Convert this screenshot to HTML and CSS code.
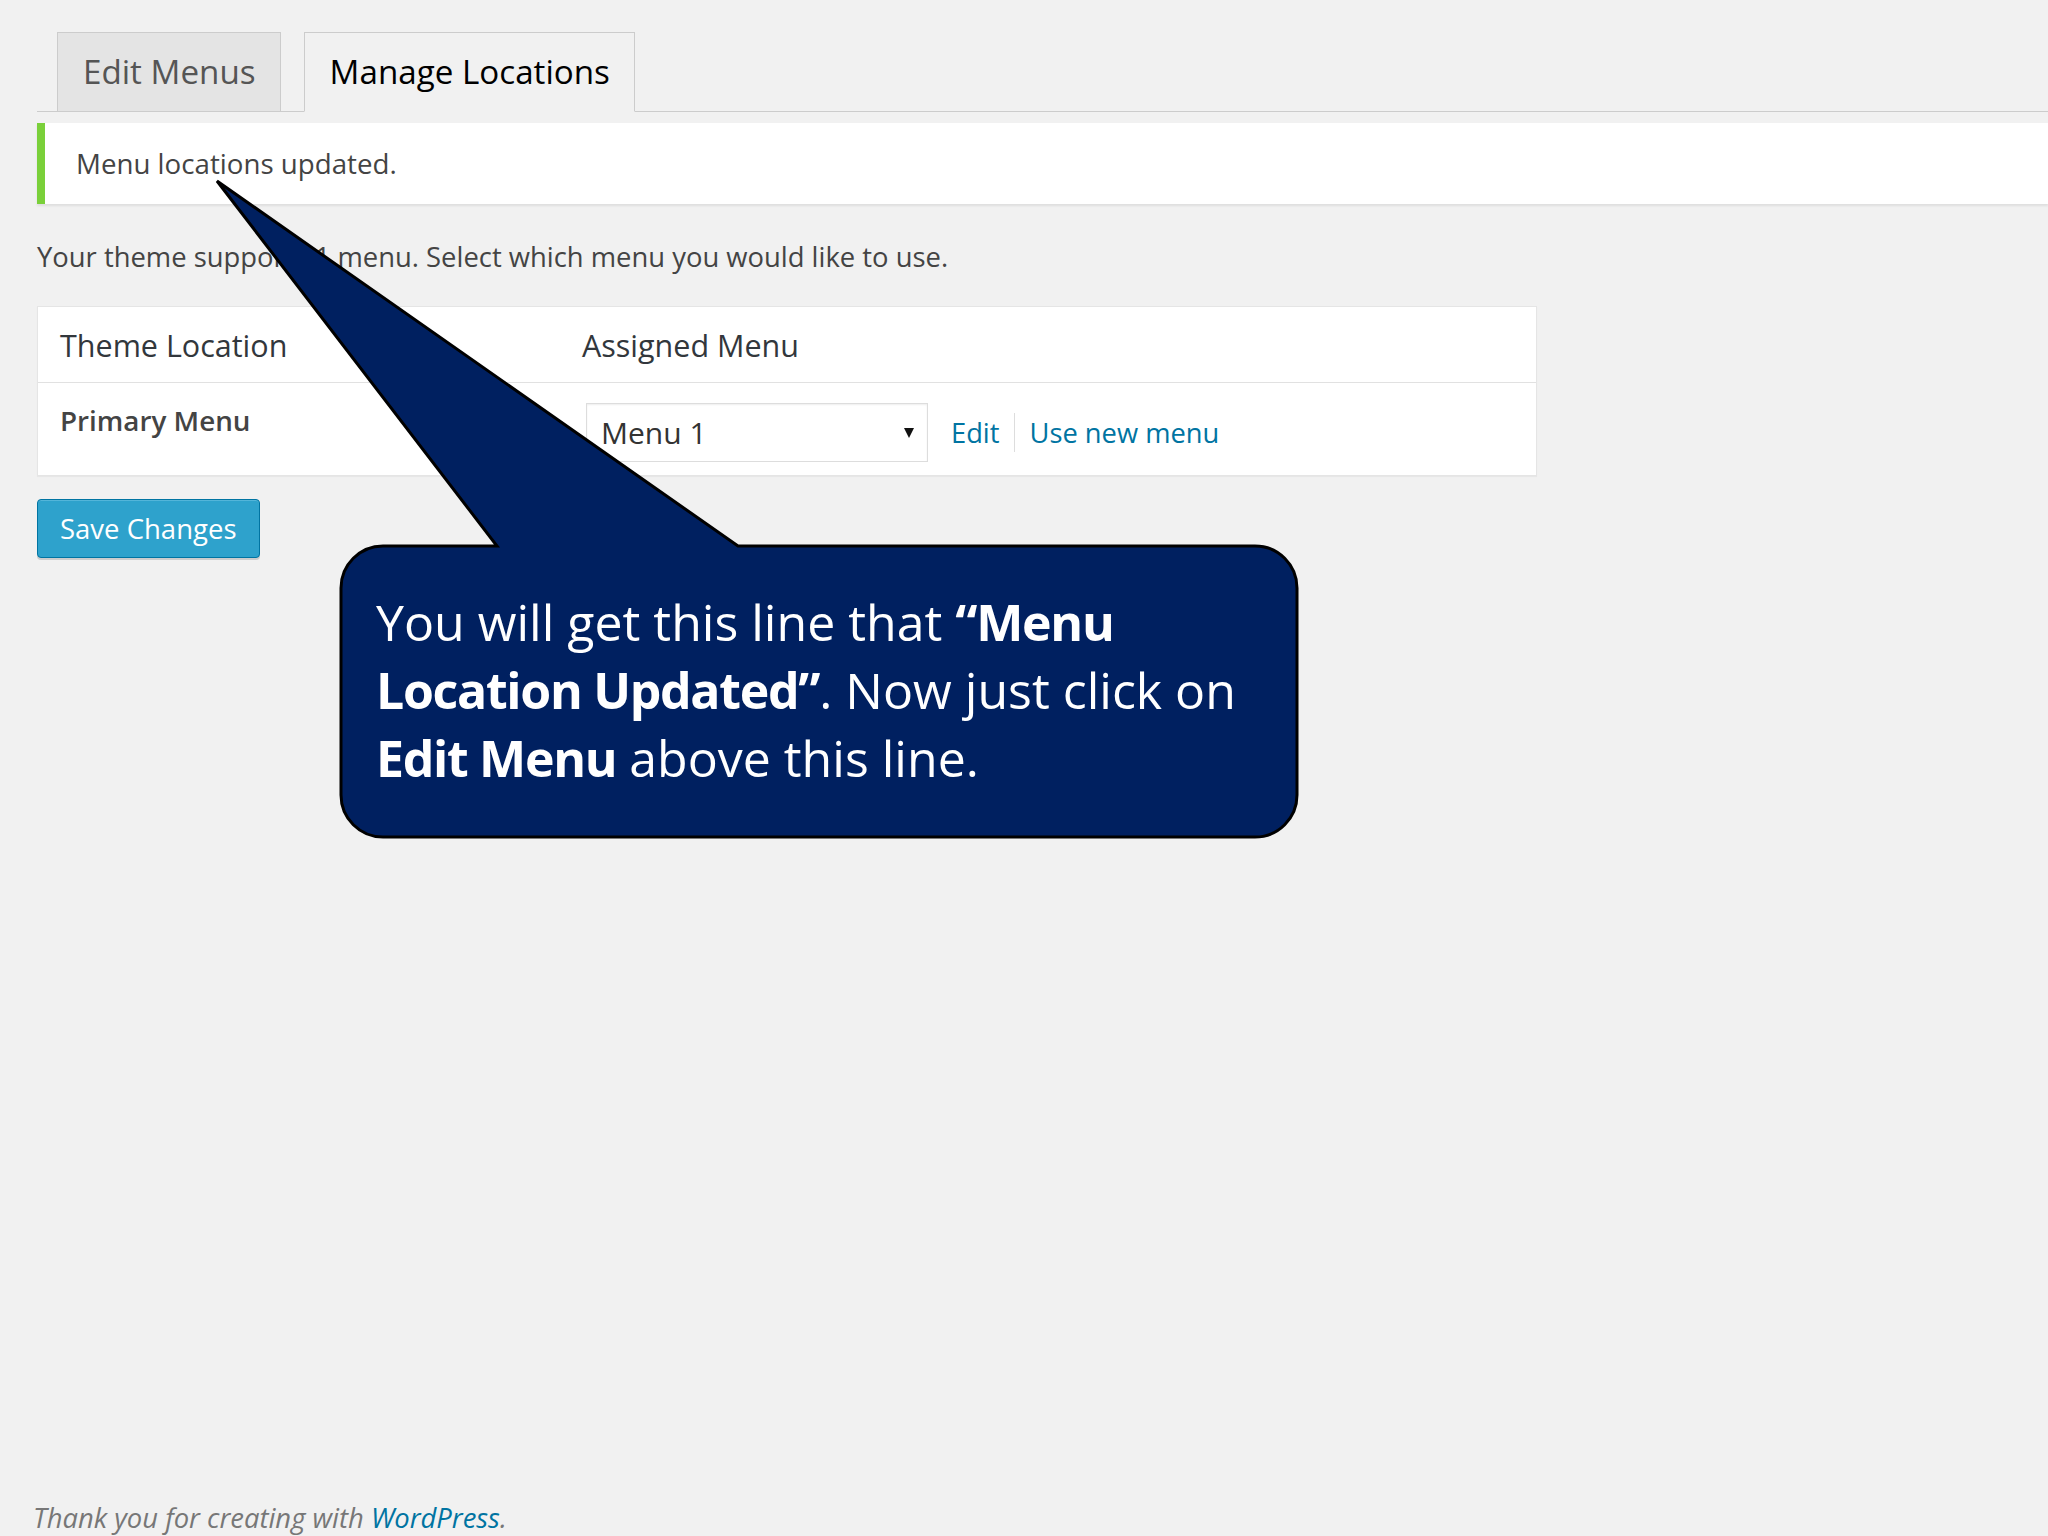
FILE: index.html
```html
<!DOCTYPE html>
<html>
<head>
<meta charset="utf-8">
<title>Manage Locations</title>
<link rel="stylesheet" href="styles.css">
</head>
<body>
<div class="page">
  <div class="wrap">
    <div class="tabs">
      <a class="tab">Edit Menus</a>
      <a class="tab active">Manage Locations</a>
    </div>
    <div class="notice"><p>Menu locations updated.</p></div>
    <p class="intro">Your theme supports 1 menu. Select which menu you would like to use.</p>
    <div class="loc-table">
      <div class="th col1">Theme Location</div>
      <div class="th col2">Assigned Menu</div>
      <div class="td col1 label">Primary Menu</div>
      <div class="td col2">
        <div class="assign">
          <div class="select"><span>Menu 1</span><i class="caret"></i></div>
          <a class="link">Edit</a>
          <span class="sep"></span>
          <a class="link">Use new menu</a>
        </div>
      </div>
    </div>
    <button class="save">Save Changes</button>
  </div>
  <footer class="footer"><span>Thank you for creating with <a class="wp">WordPress</a>.</span></footer>

  <svg class="callout-shape" width="2048" height="1536" viewBox="0 0 2048 1536">
    <path d="M 383 546 L 497 546 L 217 181 L 738 546 L 1255 546 A 42 42 0 0 1 1297 588 L 1297 795 A 42 42 0 0 1 1255 837 L 383 837 A 42 42 0 0 1 341 795 L 341 588 A 42 42 0 0 1 383 546 Z" fill="#002060" stroke="#000" stroke-width="3" stroke-linejoin="miter"/>
  </svg>
  <div class="callout-text">
    You will get this line that <b>“Menu<br>Location Updated”</b>. Now just click on<br><b>Edit Menu</b> above this line.
  </div>
</div>
</body>
</html>
```
FILE: styles.css
```css
html, body {
  margin: 0;
  padding: 0;
}
body {
  background: #f1f1f1;
  font-family: "Open Sans", "Noto Sans", sans-serif;
  color: #444;
}
.page {
  position: relative;
  height: 1536px;
  overflow: hidden;
  display: flex;
  flex-direction: column;
}
.wrap {
  padding: 32px 0 0 37px;
}
.tabs {
  display: flex;
  gap: 23px;
  padding-left: 20px;
  border-bottom: 1px solid #cccccc;
}
.tab {
  display: block;
  font-size: 33.2px;
  line-height: 44px;
  padding: 17px 24px 17px 25px;
  border: 1px solid #cccccc;
  border-bottom: 1px solid #cccccc;
  margin-bottom: -1px;
  background: #e4e4e4;
  color: #555;
}
.tab.active {
  background: #f1f1f1;
  border-bottom-color: #f1f1f1;
  color: #000;
}
.notice {
  margin-top: 11px;
  background: #fff;
  border-left: 8px solid #7ad03a;
  box-shadow: 0 2px 2px rgba(0, 0, 0, 0.08);
}
.notice p {
  margin: 0;
  padding: 22px 31px 23px;
  font-size: 27.7px;
  line-height: 36px;
  color: #444;
}
.intro {
  margin: 35px 0 0;
  font-size: 27.4px;
  line-height: 36px;
  color: #444;
}
.loc-table {
  margin-top: 31px;
  width: 1500px;
  box-sizing: border-box;
  display: grid;
  grid-template-columns: 522px 1fr;
  background: #fff;
  border: 1px solid #e5e5e5;
  box-shadow: 0 1px 1px rgba(0, 0, 0, 0.04);
}
.th {
  font-size: 30.5px;
  line-height: 40px;
  padding: 18px 22px 17px;
  color: #32373c;
  border-bottom: 1px solid #e1e1e1;
}
.td {
  padding: 20px 22px 13px;
}
.td.label {
  padding-top: 19px;
  font-size: 27.8px;
  line-height: 36px;
  font-weight: 600;
  color: #444;
}
.assign {
  display: flex;
  align-items: center;
  margin-left: 4px;
}
.select {
  width: 342px;
  height: 59px;
  box-sizing: border-box;
  display: flex;
  align-items: center;
  padding: 0 13px 0 14px;
  background: #fff;
  border: 1px solid #dddddd;
  box-shadow: inset 0 1px 2px rgba(0, 0, 0, 0.07);
  font-size: 30px;
  line-height: 40px;
  color: #333;
}
.caret {
  margin-left: auto;
  width: 0;
  height: 0;
  border-left: 5.5px solid transparent;
  border-right: 5.5px solid transparent;
  border-top: 10px solid #111;
}
.link {
  font-size: 27.3px;
  line-height: 36px;
  color: #0074a2;
}
.select + .link {
  margin-left: 23px;
}
.sep {
  width: 1px;
  height: 39px;
  background: #dddddd;
  margin: 0 15px 0 14px;
}
.save {
  align-self: flex-start;
  margin-top: 23px;
  height: 59px;
  box-sizing: border-box;
  padding: 0 22px;
  font-family: "Open Sans", "Noto Sans", sans-serif;
  font-size: 27.5px;
  line-height: 36px;
  color: #fff;
  background: #2ea2cc;
  border: 1px solid #0074a2;
  border-radius: 4px;
  box-shadow: inset 0 1px 0 rgba(120, 200, 230, 0.5), 0 2px 0 rgba(0, 0, 0, 0.15);
}
.footer {
  margin-top: auto;
  height: 36px;
  padding-left: 33px;
  font-size: 27.4px;
  line-height: 36px;
  font-style: italic;
  color: #777;
  white-space: nowrap;
}
.footer .wp {
  color: #0074a2;
}
.callout-shape {
  position: absolute;
  left: 0;
  top: 0;
  pointer-events: none;
}
.callout-text {
  position: absolute;
  left: 341px;
  top: 546px;
  width: 956px;
  box-sizing: border-box;
  padding: 42px 0 0 35px;
  font-family: "Open Sans", "Noto Sans", sans-serif;
  font-size: 50px;
  line-height: 68px;
  color: #fff;
  white-space: nowrap;
}
.callout-text b {
  font-weight: 700;
  letter-spacing: -1.3px;
}
```
